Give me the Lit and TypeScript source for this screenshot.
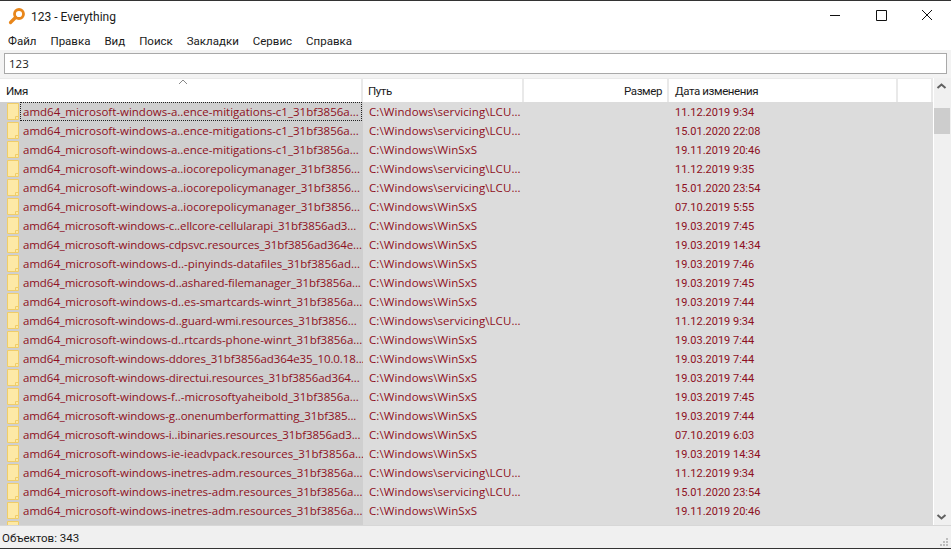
import { LitElement, css, html } from "lit";
import { customElement } from "lit/decorators.js";

const WSL = "C:\\Windows\\WinSxS";
const LCU = "C:\\Windows\\servicing\\LCU...";

// fourth field: long names that need a squeeze to stay inside the column
const rows: [string, string, string, boolean?][] = [
  ["amd64_microsoft-windows-a..ence-mitigations-c1_31bf3856a...", LCU, "11.12.2019 9:34"],
  ["amd64_microsoft-windows-a..ence-mitigations-c1_31bf3856a...", LCU, "15.01.2020 22:08"],
  ["amd64_microsoft-windows-a..ence-mitigations-c1_31bf3856a...", WSL, "19.11.2019 20:46"],
  ["amd64_microsoft-windows-a..iocorepolicymanager_31bf3856...", LCU, "11.12.2019 9:35"],
  ["amd64_microsoft-windows-a..iocorepolicymanager_31bf3856...", LCU, "15.01.2020 23:54"],
  ["amd64_microsoft-windows-a..iocorepolicymanager_31bf3856...", WSL, "07.10.2019 5:55"],
  ["amd64_microsoft-windows-c..ellcore-cellularapi_31bf3856ad3...", WSL, "19.03.2019 7:45", true],
  ["amd64_microsoft-windows-cdpsvc.resources_31bf3856ad364e...", WSL, "19.03.2019 14:34", true],
  ["amd64_microsoft-windows-d..-pinyinds-datafiles_31bf3856ad...", WSL, "19.03.2019 7:46"],
  ["amd64_microsoft-windows-d..ashared-filemanager_31bf3856a...", WSL, "19.03.2019 7:45", true],
  ["amd64_microsoft-windows-d..es-smartcards-winrt_31bf3856a...", WSL, "19.03.2019 7:44"],
  ["amd64_microsoft-windows-d..guard-wmi.resources_31bf3856...", LCU, "11.12.2019 9:34", true],
  ["amd64_microsoft-windows-d..rtcards-phone-winrt_31bf3856a...", WSL, "19.03.2019 7:44"],
  ["amd64_microsoft-windows-ddores_31bf3856ad364e35_10.0.18...", WSL, "19.03.2019 7:44", true],
  ["amd64_microsoft-windows-directui.resources_31bf3856ad364...", WSL, "19.03.2019 7:44", true],
  ["amd64_microsoft-windows-f..-microsoftyaheibold_31bf3856a...", WSL, "19.03.2019 7:45"],
  ["amd64_microsoft-windows-g..onenumberformatting_31bf385...", WSL, "19.03.2019 7:44", true],
  ["amd64_microsoft-windows-i..ibinaries.resources_31bf3856ad3...", WSL, "07.10.2019 6:03", true],
  ["amd64_microsoft-windows-ie-ieadvpack.resources_31bf3856a...", WSL, "19.03.2019 14:34"],
  ["amd64_microsoft-windows-inetres-adm.resources_31bf3856a...", LCU, "11.12.2019 9:34"],
  ["amd64_microsoft-windows-inetres-adm.resources_31bf3856a...", LCU, "15.01.2020 23:54"],
  ["amd64_microsoft-windows-inetres-adm.resources_31bf3856a...", WSL, "19.11.2019 20:46"],
];

const menus = ["Файл", "Правка", "Вид", "Поиск", "Закладки", "Сервис", "Справка"];

@customElement("app-root")
export class AppRoot extends LitElement {
  static styles = css`
    :host {
      display: block;
      width: 951px;
      height: 549px;
      overflow: hidden;
      font-family: "Open Sans", "Noto Sans", sans-serif;
      font-size: 11.5px;
      color: #1a1a1a;
      background: #fff;
    }

    .window {
      display: flex;
      flex-direction: column;
      height: 549px;
      box-sizing: border-box;
      border-top: 1px solid #333;
      border-bottom: 1px solid #333;
    }

    .ui {
      font-family: Roboto, "Noto Sans", sans-serif;
      font-size: 11.5px;
    }

    .titlebar {
      display: flex;
      align-items: center;
      height: 29px;
      flex: none;
      padding-left: 8px;
    }

    .title {
      margin: 2px 0 0 5px;
      font-size: 12px;
    }

    .controls {
      display: flex;
      margin-left: auto;
      margin-right: 1px;
    }

    .controls svg {
      display: block;
      width: 46px;
      height: 29px;
    }

    .menubar {
      display: flex;
      align-items: center;
      gap: 14px;
      height: 20px;
      box-sizing: border-box;
      flex: none;
      padding: 2px 0 0 8px;
    }

    .searchwrap {
      flex: none;
      height: 28px;
      box-sizing: border-box;
      padding: 3px 4px 4px 4px;
      background: #f3f3f3;
    }

    .search {
      height: 21px;
      box-sizing: border-box;
      border: 1px solid #a9a9a9;
      background: #fff;
      padding: 0 4px;
      line-height: 19px;
    }

    .main {
      display: flex;
      flex: 1;
      min-height: 0;
    }

    .list {
      flex: 1;
      min-width: 0;
      display: flex;
      flex-direction: column;
      overflow: hidden;
    }

    .header {
      display: grid;
      grid-template-columns: 363px 161px 145px 229px 1fr;
      height: 24px;
      box-sizing: border-box;
      border-top: 1px solid #e9e9e9;
      flex: none;
      position: relative;
      letter-spacing: -0.4px;
    }

    .header div {
      box-sizing: border-box;
      border-right: 2px solid #e9e9e9;
      padding: 3px 5px 0 5px;
      line-height: 19px;
    }

    .header div:first-child {
      padding-left: 6px;
    }

    .header div:nth-child(3) {
      text-align: right;
    }

    .header div:nth-child(4) {
      padding-left: 6px;
    }

    .header div:last-child {
      border-right: 0;
    }

    .sort {
      position: absolute;
      left: 178px;
      top: 0;
    }

    .row {
      display: grid;
      grid-template-columns: 363px 161px 145px 1fr;
      grid-template-rows: 19px;
      height: 19px;
      flex: none;
      background: #dcdcdc;
      color: #8e0f22;
      line-height: 19px;
      white-space: nowrap;
    }

    .name {
      display: flex;
      align-items: center;
      background: #cfcfcf;
      padding-left: 7px;
      overflow: hidden;
    }

    .name svg {
      flex: none;
      display: block;
      width: 12px;
      height: 17px;
    }

    .name span {
      margin-left: 1px;
      padding: 0 2px;
      height: 17px;
      line-height: 17px;
      border: 1px solid transparent;
      box-sizing: content-box;
    }

    .row.tight .name span {
      letter-spacing: -0.09px;
    }

    .row.focus .name span {
      border: 1px dotted #222;
    }

    .path {
      padding-left: 6px;
      letter-spacing: 0.08px;
    }

    .date {
      padding-left: 6px;
      font-family: Roboto, "Noto Sans", sans-serif;
      font-size: 11px;
      line-height: 21px;
    }

    .scrollbar {
      flex: none;
      width: 17px;
      margin-left: 1px;
      background: #f0f0f0;
      display: flex;
      flex-direction: column;
    }

    .scrollbar svg {
      display: block;
      width: 17px;
      height: 17px;
      flex: none;
    }

    .track {
      flex: 1;
      position: relative;
    }

    .thumb {
      position: absolute;
      left: 0;
      top: 13px;
      width: 16px;
      height: 26px;
      background: #cdcdcd;
    }

    .status {
      flex: none;
      height: 23px;
      box-sizing: border-box;
      border-top: 1px solid #d7d7d7;
      background: #f0f0f0;
      display: flex;
      align-items: center;
      padding: 2px 0 0 2px;
      position: relative;
    }

    .grip {
      position: absolute;
      right: 3px;
      bottom: 2px;
      width: 8px;
      height: 8px;
    }
  `;

  folder() {
    return html`<svg viewBox="0 0 12 17">
      <path d="M0.5 0.500H11.5V16.500H0.5Z" fill="#fde9a6" stroke="#f0cd68" />
      <path d="M8.500 16V13.500H11" fill="none" stroke="#f0cd68" />
    </svg>`;
  }

  render() {
    return html`
      <div class="window">
        <div class="titlebar">
          <svg width="18" height="18" viewBox="0 0 18 18">
            <circle cx="11" cy="7" r="4.500" fill="none" stroke="#e8861a" stroke-width="2.800" />
            <path d="M7.500 10.500L2.500 15.500" stroke="#e8861a" stroke-width="3.200" stroke-linecap="round" />
          </svg>
          <span class="title ui">123 - Everything</span>
          <div class="controls">
            <svg viewBox="0 0 46 29"><path d="M18 14.500H28" stroke="#111" /></svg>
            <svg viewBox="0 0 46 29"><path d="M18.500 9.500H28.500V19.500H18.500Z" fill="none" stroke="#111" /></svg>
            <svg viewBox="0 0 46 29"><path d="M18 9L28 19M28 9L18 19" stroke="#111" /></svg>
          </div>
        </div>
        <div class="menubar ui">${menus.map(m => html`<span>${m}</span>`)}</div>
        <div class="searchwrap"><div class="search">123</div></div>
        <div class="main">
          <div class="list">
            <div class="header ui">
              <div>Имя</div><div>Путь</div><div>Размер</div><div>Дата изменения</div><div></div>
              <svg class="sort" width="10" height="6" viewBox="0 0 10 6">
                <path d="M1 5L5 1L9 5" fill="none" stroke="#888" />
              </svg>
            </div>
            ${rows.map(
              (r, i) => html`<div class="row ${i === 0 ? "focus" : ""} ${r[3] ? "tight" : ""}">
                <div class="name">${this.folder()}<span>${r[0]}</span></div>
                <div class="path">${r[1]}</div>
                <div></div>
                <div class="date">${r[2]}</div>
              </div>`
            )}
            <div class="row"><div class="name">${this.folder()}</div></div>
          </div>
          <div class="scrollbar">
            <svg viewBox="0 0 17 17"><path d="M3.500 10L7.500 6.500L11.500 10" fill="none" stroke="#606060" stroke-width="2" /></svg>
            <div class="track"><div class="thumb"></div></div>
            <svg viewBox="0 0 17 17"><path d="M3.500 7L7.500 10.500L11.500 7" fill="none" stroke="#606060" stroke-width="2" /></svg>
          </div>
        </div>
        <div class="status ui">
          Объектов: 343
          <svg class="grip" viewBox="0 0 8 8">
            <path d="M6 0h2v2H6zM3 3h2v2H3zM6 3h2v2H6zM0 6h2v2H0zM3 6h2v2H3zM6 6h2v2H6z" fill="#bdbdbd" />
          </svg>
        </div>
      </div>
    `;
  }
}
